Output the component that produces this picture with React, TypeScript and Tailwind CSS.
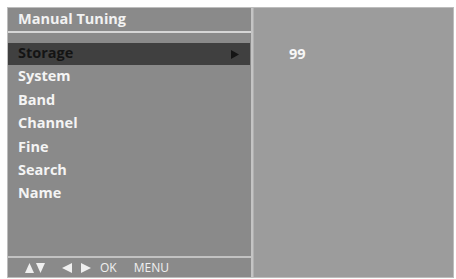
function Tri({ dir, w, h, color }: { dir: "up" | "down" | "left" | "right"; w: number; h: number; color: string }) {
  const pts =
    dir === "up"
      ? `0,${h} ${w / 2},0 ${w},${h}`
      : dir === "down"
      ? `0,0 ${w},0 ${w / 2},${h}`
      : dir === "left"
      ? `${w},0 ${w},${h} 0,${h / 2}`
      : `0,0 ${w},${h / 2} 0,${h}`;
  return (
    <svg width={w} height={h} viewBox={`0 0 ${w} ${h}`} className="block">
      <polygon points={pts} fill={color} />
    </svg>
  );
}

export default function App() {
  const items = ["System", "Band", "Channel", "Fine", "Search", "Name"];
  return (
    <div
      className="w-[456px] h-[279px] bg-white pt-[7px] pl-[7px]"
      style={{ fontFamily: '"Open Sans", "DejaVu Sans", sans-serif' }}
    >
      <div className="w-[447px] h-[271px] flex border border-[#bdbdbd] bg-[#8c8c8c]">
        {/* left menu */}
        <div className="w-[245px] flex flex-col bg-[#8a8a8a] border-r-2 border-[#c4c4c4]">
          <div className="h-[23px] pl-[10px] flex items-center text-[14.5px] font-bold text-[#f2f2f2] leading-none">
            Manual Tuning
          </div>
          <div className="h-[2px] bg-[#d6d6d6]" />
          <div className="pt-[10px] flex-1">
            <div className="h-[22px] mr-[1px] bg-[#404040] flex items-center justify-between pl-[10px] pr-[11px]">
              <span className="text-[14.5px] font-bold text-[#141414] leading-none pb-[2px]">Storage</span>
              <Tri dir="right" w={8} h={9} color="#141414" />
            </div>
            {items.map((it) => (
              <div
                key={it}
                className="h-[23.4px] pl-[10px] flex items-center text-[14.5px] font-bold text-[#f4f4f4] leading-none"
              >
                {it}
              </div>
            ))}
          </div>
          <div className="h-[2px] bg-[#c2c2c2]" />
          <div className="h-[19px] flex items-center pl-[17px] text-[12px] text-[#f0f0f0] leading-none">
            <Tri dir="up" w={9} h={10} color="#f0f0f0" />
            <span className="ml-[2px]"><Tri dir="down" w={9} h={10} color="#f0f0f0" /></span>
            <span className="ml-[17px]"><Tri dir="left" w={10} h={10} color="#f0f0f0" /></span>
            <span className="ml-[9px]"><Tri dir="right" w={10} h={10} color="#f0f0f0" /></span>
            <span className="ml-[9px]">OK</span>
            <span className="ml-[17px]">MENU</span>
          </div>
        </div>
        {/* right value panel */}
        <div className="flex-1 bg-[#9c9c9c] border-l border-[#b0b0b0]">
          <div className="pt-[39px] pl-[35px] text-[14.5px] font-bold text-[#f6f6f6] leading-none">99</div>
        </div>
      </div>
    </div>
  );
}
